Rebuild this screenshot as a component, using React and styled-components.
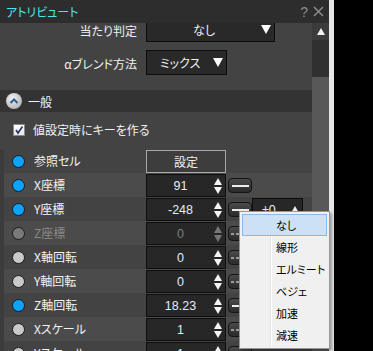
import React from "react";
import styled, { createGlobalStyle, css } from "styled-components";

const Global = createGlobalStyle`
  html, body { margin: 0; padding: 0; background: #000; }
  body {
    font-family: "Noto Sans CJK JP", "Noto Sans", sans-serif;
    font-size: 12px;
    font-feature-settings: "palt";
  }
  * { box-sizing: border-box; }
`;

const Screen = styled.div`
  position: relative;
  display: flex;
  width: 373px;
  height: 351px;
  overflow: hidden;
  background: #000;
`;

const Panel = styled.div`
  width: 329px;
  height: 351px;
  display: flex;
  flex-direction: column;
  background: #434343;
`;

const FrameEdge = styled.div`
  width: 5px;
  background: #e6e6e6;
`;

const TitleBar = styled.div`
  height: 23px;
  flex: none;
  display: flex;
  align-items: center;
  padding: 0 5px 0 6px;
  background: #2d2d2d;
`;

const Title = styled.div`
  flex: 1;
  color: #4de3ee;
  font-size: 12px;
  line-height: 23px;
`;

const Help = styled.span`
  color: #8c8c8c;
  font-family: "Liberation Sans", sans-serif;
  font-size: 14px;
  margin-right: 5px;
`;

const Body = styled.div`
  flex: 1;
  display: flex;
  min-height: 0;
`;

const Scroll = styled.div`
  flex: 1;
  overflow: hidden;
  background: #434343;
`;

const Inner = styled.div`
  margin-top: -6px;
`;

const SelectSection = styled.div`
  display: flex;
  flex-direction: column;
  gap: 8px;
  padding-bottom: 15px;
`;

const SelectRow = styled.div`
  display: grid;
  grid-template-columns: 137px auto;
  column-gap: 9px;
  align-items: center;
  height: 25px;
`;

const SelectLabel = styled.div`
  text-align: right;
  color: #f0f0f0;
  padding-top: 2px;
`;

const Dropdown = styled.div`
  width: ${(p) => p.$w}px;
  height: 25px;
  display: flex;
  align-items: center;
  border: 1px solid #0c0c0c;
  background: #292929;
  color: #f0f0f0;
  padding-right: 3px;
`;

const DropText = styled.div`
  flex: 1;
  text-align: center;
`;

const DownTri = styled.div`
  width: 0;
  height: 0;
  border-left: 5px solid transparent;
  border-right: 5px solid transparent;
  border-top: 9px solid #fafafa;
`;

const SectionHeader = styled.div`
  height: 22px;
  display: flex;
  align-items: center;
  gap: 6px;
  padding-left: 6px;
  background: #333333;
  color: #f0f0f0;
`;

const Collapse = styled.div`
  width: 16px;
  height: 16px;
  border-radius: 50%;
  background: radial-gradient(circle at 40% 35%, #f4f4f4, #b9b9b9 70%, #8d8d8d);
  display: flex;
  align-items: center;
  justify-content: center;
`;

const CheckRow = styled.div`
  display: flex;
  align-items: center;
  gap: 8px;
  padding: 12px 0 13px 13px;
  color: #f0f0f0;
  line-height: 12px;
`;

const CheckBox = styled.div`
  width: 12px;
  height: 12px;
  border: 1px solid #8a8a8a;
  background: linear-gradient(#ffffff, #e6e6e6);
  display: flex;
  align-items: center;
  justify-content: center;
`;

const PropList = styled.div`
  display: flex;
  flex-direction: column;
`;

const Row = styled.div`
  height: 24px;
  display: flex;
  align-items: flex-start;
  padding-left: 12px;
  background: ${(p) =>
    p.$striped
      ? "linear-gradient(90deg, #3c3c3c 0 4px, #4b4b4b 4px)"
      : "linear-gradient(90deg, #3c3c3c 0 4px, #434343 4px)"};
`;

const Dot = styled.div`
  width: 13px;
  height: 13px;
  margin-top: 6px;
  border-radius: 50%;
  border: 1px solid #1a1a1a;
  background: ${(p) =>
    p.$kind === "blue" ? "#0aa3ff" : p.$kind === "dim" ? "#7a7a7a" : "#c9c9c9"};
`;

const Label = styled.div`
  width: 112px;
  margin-left: 9px;
  line-height: 24px;
  color: ${(p) => (p.$dim ? "#888" : "#f2f2f2")};
`;

const NumBox = styled.div`
  width: ${(p) => p.$w || 80}px;
  height: 23px;
  margin-top: 1px;
  display: flex;
  align-items: center;
  border: 1px solid #0e0e0e;
  background: #272727;
  padding-right: 3px;
`;

const NumText = styled.div`
  flex: 1;
  text-align: ${(p) => (p.$left ? "left" : "center")};
  padding-left: ${(p) => (p.$left ? "9px" : "0")};
  color: ${(p) => (p.$dim ? "#7d7d7d" : "#e4ecf8")};
  font-family: "Liberation Sans", sans-serif;
  font-size: 12.5px;
`;

const Spinner = styled.div`
  display: flex;
  flex-direction: column;
  gap: 2px;
  width: 8px;
`;

const tri = css`
  width: 0;
  height: 0;
  border-left: 4px solid transparent;
  border-right: 4px solid transparent;
`;

const Up = styled.div`
  ${tri};
  border-bottom: 7px solid ${(p) => (p.$dim ? "#767676" : "#f4f4f4")};
`;

const Down = styled.div`
  ${tri};
  border-top: 7px solid ${(p) => (p.$dim ? "#767676" : "#f4f4f4")};
`;

const SetButton = styled.div`
  width: 80px;
  height: 23px;
  margin-top: 1px;
  border: 1px solid #a8a8a8;
  background: #3d3d3d;
  color: #f0f0f0;
  display: flex;
  align-items: center;
  justify-content: center;
`;

const LinkBtn = styled.div`
  width: 24px;
  height: 15px;
  margin-top: 5px;
  margin-left: 2px;
  border-radius: 4px;
  border: 1px solid #141414;
  background: linear-gradient(#4a4a4a, #2b2b2b);
  display: flex;
  align-items: center;
  justify-content: center;
  gap: 2px;
`;

const Bar = styled.div`
  height: 2px;
  width: ${(p) => (p.$solid ? 17 : 3)}px;
  background: ${(p) => (p.$solid ? "#ececec" : "#9a9a9a")};
`;

const ScrollBar = styled.div`
  width: 17px;
  display: flex;
  flex-direction: column;
  background: #303030;
`;

const ScrollBtn = styled.div`
  height: 17px;
  background: #3b3b3b;
  display: flex;
  align-items: center;
  justify-content: center;
`;

const Thumb = styled.div`
  margin-top: 37px;
  flex: 1;
  background: #585858;
`;

const Menu = styled.div`
  position: absolute;
  left: 239px;
  top: 211px;
  width: 91px;
  padding: 2px;
  border: 1px solid #979797;
  background: #f0f0f0;
  box-shadow: 2px 2px 3px rgba(0, 0, 0, 0.35);
  display: flex;
  flex-direction: column;
  &::before {
    content: "";
    position: absolute;
    top: 2px;
    bottom: 2px;
    left: 30px;
    width: 1px;
    background: #e2e2e2;
    box-shadow: 1px 0 0 #ffffff;
  }
`;

const MenuItem = styled.div`
  position: relative;
  z-index: 1;
  height: 22px;
  line-height: 20px;
  padding-left: 33px;
  white-space: nowrap;
  font-size: 11px;
  color: #000;
  border: 1px solid ${(p) => (p.$active ? "#8ab9e8" : "transparent")};
  background: ${(p) => (p.$active ? "rgba(198, 222, 247, 0.85)" : "transparent")};
`;

const rows = [
  { label: "X座標", dot: "blue", value: "91", link: true, striped: true },
  { label: "Y座標", dot: "blue", value: "-248", link: true, extra: "±0" },
  { label: "Z座標", dot: "dim", value: "0", dim: true, striped: true },
  { label: "X軸回転", dot: "gray", value: "0" },
  { label: "Y軸回転", dot: "gray", value: "0", striped: true },
  { label: "Z軸回転", dot: "blue", value: "18.23", link: true },
  { label: "Xスケール", dot: "gray", value: "1", striped: true },
  { label: "Yスケール", dot: "gray", value: "1" },
];

const menuItems = ["なし", "線形", "エルミート", "ベジェ", "加速", "減速"];

function Link({ solid }) {
  return (
    <LinkBtn>
      {solid ? (
        <Bar $solid />
      ) : (
        <>
          <Bar />
          <Bar />
          <Bar />
          <Bar />
        </>
      )}
    </LinkBtn>
  );
}

export default function App() {
  return (
    <>
      <Global />
      <Screen>
        <Panel>
          <TitleBar>
            <Title>アトリビュート</Title>
            <Help>?</Help>
            <svg width="11" height="11" viewBox="0 0 11 11">
              <path d="M1 1 L10 10 M10 1 L1 10" stroke="#8c8c8c" strokeWidth="1.5" />
            </svg>
          </TitleBar>
          <Body>
            <Scroll>
              <Inner>
                <SelectSection>
                  <SelectRow>
                    <SelectLabel>当たり判定</SelectLabel>
                    <Dropdown $w={129}>
                      <DropText>なし</DropText>
                      <DownTri />
                    </Dropdown>
                  </SelectRow>
                  <SelectRow>
                    <SelectLabel>αブレンド方法</SelectLabel>
                    <Dropdown $w={81}>
                      <DropText>ミックス</DropText>
                      <DownTri />
                    </Dropdown>
                  </SelectRow>
                </SelectSection>
                <SectionHeader>
                  <Collapse>
                    <svg width="10" height="8" viewBox="0 0 10 8">
                      <path d="M1.5 6 L5 2.5 L8.5 6" fill="none" stroke="#2b5d9c" strokeWidth="2" />
                    </svg>
                  </Collapse>
                  一般
                </SectionHeader>
                <CheckRow>
                  <CheckBox>
                    <svg width="10" height="10" viewBox="0 0 10 10">
                      <path d="M2 5 L4 8 L8.5 1.5" fill="none" stroke="#23346e" strokeWidth="1.6" />
                    </svg>
                  </CheckBox>
                  値設定時にキーを作る
                </CheckRow>
                <PropList>
                  <Row>
                    <Dot $kind="blue" />
                    <Label>参照セル</Label>
                    <SetButton>設定</SetButton>
                  </Row>
                  {rows.map((r) => (
                    <Row key={r.label} $striped={r.striped}>
                      <Dot $kind={r.dot} />
                      <Label $dim={r.dim}>{r.label}</Label>
                      <NumBox>
                        <NumText $dim={r.dim}>{r.value}</NumText>
                        <Spinner>
                          <Up $dim={r.dim} />
                          <Down $dim={r.dim} />
                        </Spinner>
                      </NumBox>
                      <Link solid={r.link} />
                      {r.extra && (
                        <NumBox $w={51}>
                          <NumText $left>{r.extra}</NumText>
                          <Spinner>
                            <Up />
                          </Spinner>
                        </NumBox>
                      )}
                    </Row>
                  ))}
                </PropList>
              </Inner>
            </Scroll>
            <ScrollBar>
              <ScrollBtn>
                <Up />
              </ScrollBtn>
              <Thumb />
            </ScrollBar>
          </Body>
        </Panel>
        <FrameEdge />
        <Menu>
          {menuItems.map((m, i) => (
            <MenuItem key={m} $active={i === 0}>
              {m}
            </MenuItem>
          ))}
        </Menu>
      </Screen>
    </>
  );
}
